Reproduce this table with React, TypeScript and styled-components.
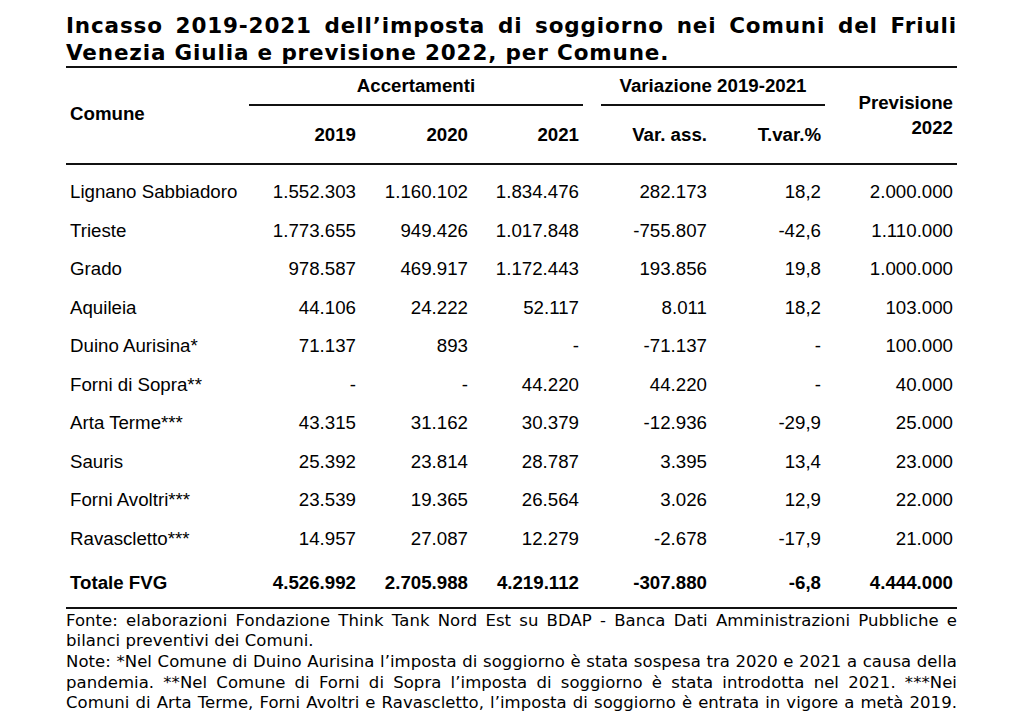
import React from "react";
import styled, { createGlobalStyle } from "styled-components";

const GlobalStyle = createGlobalStyle`
  html, body { margin: 0; padding: 0; background: #ffffff; }
  body { color: #000; }
`;

const COLS = "181px 113px 112px 111px 128px 114px 132px";

const Page = styled.div`
  width: 891px;
  padding-left: 66px;
  padding-top: 12px;
  background: #fff;
`;

const Title = styled.h1`
  margin: 0;
  font-family: "DejaVu Sans", Verdana, sans-serif;
  font-weight: bold;
  font-size: 21.5px;
  line-height: 27px;
  letter-spacing: 0.85px;
  border-bottom: 2px solid #111;
`;

const Line = styled.div<{ $justify?: boolean }>`
  text-align: ${(p) => (p.$justify ? "justify" : "left")};
  text-align-last: ${(p) => (p.$justify ? "justify" : "left")};
  white-space: ${(p) => (p.$justify ? "normal" : "nowrap")};
`;

const Head = styled.div`
  display: grid;
  grid-template-columns: ${COLS};
  grid-template-rows: 38px 57px;
  border-bottom: 2px solid #111;
  font-family: "Liberation Sans", Arial, sans-serif;
  font-weight: bold;
  font-size: 18.7px;
`;

const HeadLabel = styled.div<{ $col: string; $row: string; $align?: string; $lift?: number }>`
  grid-column: ${(p) => p.$col};
  grid-row: ${(p) => p.$row};
  display: flex;
  align-items: center;
  justify-content: ${(p) => p.$align || "flex-end"};
  padding: 0 4px ${(p) => p.$lift || 0}px;
  text-align: right;
`;

const Group = styled.div<{ $col: string; $offset: number }>`
  grid-column: ${(p) => p.$col};
  grid-row: 1;
  margin-left: ${(p) => p.$offset}px;
  border-bottom: 2px solid #111;
  display: flex;
  align-items: center;
  justify-content: center;
`;

const StackLabel = styled.div`
  grid-column: 7;
  grid-row: 1 / span 2;
  align-self: center;
  padding: 0 4px 2px 0;
  text-align: right;
  line-height: 25px;
`;

const Body = styled.div`
  padding: 8px 0 4px;
  border-bottom: 2px solid #111;
  font-family: "Liberation Sans", Arial, sans-serif;
  font-size: 18.7px;
`;

const Row = styled.div<{ $total?: boolean }>`
  display: grid;
  grid-template-columns: ${COLS};
  height: 38.5px;
  align-items: center;
  font-weight: ${(p) => (p.$total ? "bold" : "normal")};
  margin-top: ${(p) => (p.$total ? "6px" : "0")};
`;

const Cell = styled.div<{ $name?: boolean }>`
  text-align: ${(p) => (p.$name ? "left" : "right")};
  padding: ${(p) => (p.$name ? "0 0 0 4px" : "0 4px 0 0")};
  white-space: nowrap;
`;

const Notes = styled.div`
  padding-top: 2px;
  font-family: "DejaVu Sans", Verdana, sans-serif;
  font-size: 16.5px;
  line-height: 20.7px;
  letter-spacing: 0.05px;
`;

const rows: string[][] = [
  ["Lignano Sabbiadoro", "1.552.303", "1.160.102", "1.834.476", "282.173", "18,2", "2.000.000"],
  ["Trieste", "1.773.655", "949.426", "1.017.848", "-755.807", "-42,6", "1.110.000"],
  ["Grado", "978.587", "469.917", "1.172.443", "193.856", "19,8", "1.000.000"],
  ["Aquileia", "44.106", "24.222", "52.117", "8.011", "18,2", "103.000"],
  ["Duino Aurisina*", "71.137", "893", "-", "-71.137", "-", "100.000"],
  ["Forni di Sopra**", "-", "-", "44.220", "44.220", "-", "40.000"],
  ["Arta Terme***", "43.315", "31.162", "30.379", "-12.936", "-29,9", "25.000"],
  ["Sauris", "25.392", "23.814", "28.787", "3.395", "13,4", "23.000"],
  ["Forni Avoltri***", "23.539", "19.365", "26.564", "3.026", "12,9", "22.000"],
  ["Ravascletto***", "14.957", "27.087", "12.279", "-2.678", "-17,9", "21.000"],
];

const total = ["Totale FVG", "4.526.992", "2.705.988", "4.219.112", "-307.880", "-6,8", "4.444.000"];

export default function App() {
  return (
    <>
      <GlobalStyle />
      <Page>
        <Title>
          <Line $justify>Incasso 2019-2021 dell’imposta di soggiorno nei Comuni del Friuli</Line>
          <Line>Venezia Giulia e previsione 2022, per Comune.</Line>
        </Title>
        <Head>
          <HeadLabel $col="1" $row="1 / span 2" $align="flex-start" $lift={4}>Comune</HeadLabel>
          <Group $col="2 / span 3" $offset={2}>Accertamenti</Group>
          <Group $col="5 / span 2" $offset={18}>Variazione 2019-2021</Group>
          <HeadLabel $col="2" $row="2">2019</HeadLabel>
          <HeadLabel $col="3" $row="2">2020</HeadLabel>
          <HeadLabel $col="4" $row="2">2021</HeadLabel>
          <HeadLabel $col="5" $row="2">Var. ass.</HeadLabel>
          <HeadLabel $col="6" $row="2">T.var.%</HeadLabel>
          <StackLabel>
            Previsione
            <br />
            2022
          </StackLabel>
        </Head>
        <Body>
          {rows.map((r) => (
            <Row key={r[0]}>
              {r.map((v, i) => (
                <Cell key={i} $name={i === 0}>{v}</Cell>
              ))}
            </Row>
          ))}
          <Row $total>
            {total.map((v, i) => (
              <Cell key={i} $name={i === 0}>{v}</Cell>
            ))}
          </Row>
        </Body>
        <Notes>
          <Line $justify>Fonte: elaborazioni Fondazione Think Tank Nord Est su BDAP - Banca Dati Amministrazioni Pubbliche e</Line>
          <Line>bilanci preventivi dei Comuni.</Line>
          <Line $justify>Note: *Nel Comune di Duino Aurisina l’imposta di soggiorno è stata sospesa tra 2020 e 2021 a causa della</Line>
          <Line $justify>pandemia. **Nel Comune di Forni di Sopra l’imposta di soggiorno è stata introdotta nel 2021. ***Nei</Line>
          <Line $justify>Comuni di Arta Terme, Forni Avoltri e Ravascletto, l’imposta di soggiorno è entrata in vigore a metà 2019.</Line>
        </Notes>
      </Page>
    </>
  );
}
